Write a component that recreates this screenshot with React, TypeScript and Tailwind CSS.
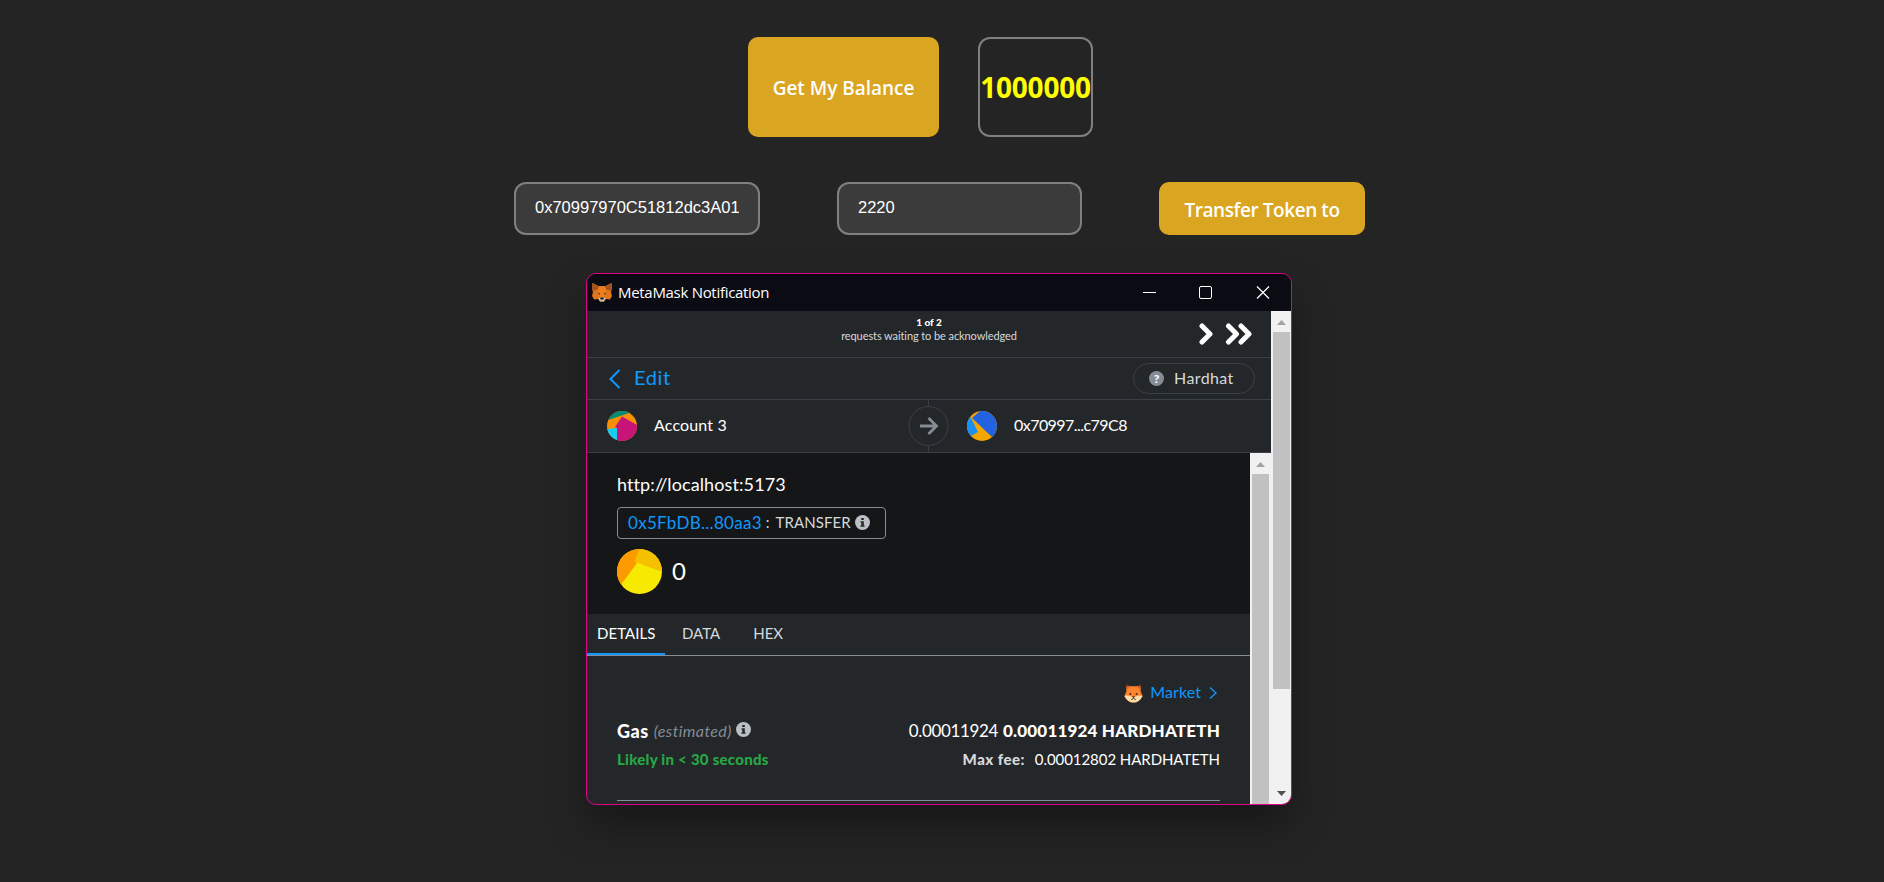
import React from "react";

function FoxLogo() {
  return (
    <svg width="20" height="19" viewBox="0 0 20 19" className="shrink-0">
      <path d="M0.5 0 L7 3.2 H13 L19.5 0 L20 6 L19 9 L20 13 L18 16.5 L14 16 L12 18.5 H8 L6 16 L2 16.5 L0 13 L1 9 L0 6Z" fill="#e2761b" />
      <path d="M0.5 0 L7 3.4 L5.5 6.5 L1 8 L0 6Z M19.5 0 L13 3.4 L14.5 6.5 L19 8 L20 6Z" fill="#a3541f" />
      <path d="M7 3.2 H13 L14 9 L12 14 H8 L6 9Z" fill="#ee7f1c" />
      <path d="M5.5 9.6 L8.2 10.6 L7.3 11.8Z M14.5 9.6 L11.8 10.6 L12.7 11.8Z" fill="#4a2f20" />
      <path d="M6.5 15.5 L8 14.2 H12 L13.5 15.5 L12 18.5 H8Z" fill="#c9bdb4" />
      <path d="M8.2 14.6 H11.8 L11.5 16.6 H8.5Z" fill="#1c1a1a" />
    </svg>
  );
}

function FoxEmoji() {
  return (
    <svg width="19" height="19" viewBox="0 0 20 20" className="shrink-0">
      <path d="M3 0.5 Q5 0.8 6.6 2.4 H13.4 Q15 0.8 17 0.5 Q18 4 17.5 8 L19.6 12.5 Q16 19.5 10 19.5 Q4 19.5 0.4 12.5 L2.5 8 Q2 4 3 0.5Z" fill="#ff822d" />
      <path d="M3 0.5 Q5 0.8 6.6 2.4 L3 2.4Z M17 0.5 Q15 0.8 13.4 2.4 L17 2.4Z" fill="#4d2320" />
      <path d="M3.2 2.6 H6 L3.6 6Z M16.8 2.6 H14 L16.4 6Z" fill="#e8502c" />
      <path d="M0.4 12.5 Q5 11.5 8 13.5 Q10 14.5 12 13.5 Q15 11.5 19.6 12.5 Q16 19.5 10 19.5 Q4 19.5 0.4 12.5Z" fill="#ffdca7" />
      <circle cx="6.7" cy="10.5" r="1.1" fill="#402a32" />
      <circle cx="13.3" cy="10.5" r="1.1" fill="#402a32" />
      <path d="M8.3 13.2 H11.7 L10 15Z" fill="#302024" />
      <path d="M7.6 16.6 L10 15 L12.4 16.6" stroke="#302024" fill="none" />
    </svg>
  );
}

function Info({ className }: { className: string }) {
  return (
    <svg width="15" height="15" viewBox="0 0 15 15" className={className}>
      <circle cx="7.5" cy="7.5" r="7.5" fill="#bbc0c5" />
      <path d="M6.2 3H8.8V5H6.2ZM5.5 6.2H8.8V10.4H9.6V11.8H5.4V10.4H6.3V7.6H5.5Z" fill="#24272a" />
    </svg>
  );
}

function AccountFrom() {
  return (
    <svg width="30" height="30" viewBox="0 0 30 30" className="shrink-0">
      <clipPath id="from"><circle cx="15" cy="15" r="15" /></clipPath>
      <g clipPath="url(#from)">
        <rect width="30" height="30" fill="#fa8e02" />
        <path d="M0 0H30V0L22 2L0 9.5Z" fill="#038c75" />
        <path d="M0 18L10 17V30H0Z" fill="#18cdf2" />
        <path d="M15 5.5L30 14V30H10L10 17L8 16Z" fill="#c81478" />
      </g>
    </svg>
  );
}

function AccountTo() {
  return (
    <svg width="30" height="30" viewBox="0 0 30 30" className="shrink-0">
      <clipPath id="to"><circle cx="15" cy="15" r="15" /></clipPath>
      <g clipPath="url(#to)">
        <rect width="30" height="30" fill="#f3a600" />
        <path d="M13 0H30V30L25 26L5 7Z" fill="#2362e1" />
        <path d="M0 5L4 7L11 21L2 26L0 26Z" fill="#1c8ff2" />
      </g>
    </svg>
  );
}

function TokenIcon() {
  return (
    <svg width="45" height="45" viewBox="0 0 45 45" className="shrink-0">
      <clipPath id="token"><circle cx="22.5" cy="22.5" r="22.5" /></clipPath>
      <g clipPath="url(#token)">
        <rect width="45" height="45" fill="#f5ea00" />
        <path d="M0 0H24L18 12L20 14L0 41Z" fill="#fc9a00" />
        <path d="M22.5 0H45V23L20 13.5L17.5 12.5Z" fill="#f5c000" />
      </g>
    </svg>
  );
}

function TitleBar() {
  return (
    <div className="flex h-[37px] shrink-0 items-center bg-[#0b0b14] pl-[5px] pr-[21px]">
      <FoxLogo />
      <span className="ml-[6px] font-['Open_Sans',sans-serif] text-[15px] tracking-[-0.3px] text-white">MetaMask Notification</span>
      <svg width="127" height="13" viewBox="0 0 127 13" className="ml-auto" fill="none" stroke="#fff">
        <path d="M0 6.5H13" />
        <rect x="56.5" y="0.5" width="12" height="12" rx="1.5" />
        <path d="M114 0.5L126 12.5M126 0.5L114 12.5" strokeWidth="1.2" />
      </svg>
    </div>
  );
}

function Queue() {
  return (
    <div className="flex h-[47px] shrink-0 border-b border-[#3b4046]">
      <div className="w-[177px]" />
      <div className="flex-1 pt-[4px] text-center leading-[14px] text-[#d6d9dc]">
        <div className="text-[10px] font-black text-white"><span>1 of 2</span></div>
        <div className="whitespace-nowrap text-[11px]"><span className="tracking-[-0.09px]">requests waiting to be acknowledged</span></div>
      </div>
      <div className="w-[177px] pl-[105px] pt-[12px]">
        <svg width="54" height="22" viewBox="0 0 54 22" fill="none" stroke="#fff" strokeWidth="5" strokeLinecap="round" strokeLinejoin="round">
          <path d="M3 3L11 11L3 19M29.5 3L37.5 11L29.5 19M42 3L50 11L42 19" />
        </svg>
      </div>
    </div>
  );
}

function EditRow() {
  return (
    <div className="flex h-[42px] shrink-0 items-center border-b border-[#3b4046] pl-[22px] pr-[16px]">
      <svg width="12" height="20" viewBox="0 0 12 20" fill="none" stroke="#1098fc" strokeWidth="2">
        <path d="M10.5 1L1.5 10L10.5 19" />
      </svg>
      <span className="mb-[3px] ml-[13px] text-[20px] tracking-[0.6px] text-[#1098fc]">Edit</span>
      <div className="ml-auto flex h-[31px] w-[122px] items-center rounded-full border border-[#3b4046] pl-[15px]">
        <span className="flex h-[15px] w-[15px] items-center justify-center rounded-full bg-[#848c96] text-[12px] font-black leading-none text-white">?</span>
        <span className="mb-[2px] ml-[10px] text-[16px] tracking-[0.4px] text-[#d6d9dc]">Hardhat</span>
      </div>
    </div>
  );
}

function Accounts() {
  return (
    <div className="flex h-[53px] shrink-0 items-center border-b border-[#3b4046] text-[16px] text-white">
      <div className="flex w-[321px] items-center pl-[20px]">
        <AccountFrom />
        <span className="mb-[2px] ml-[17px] tracking-[0.15px]">Account 3</span>
      </div>
      <svg width="41" height="52" viewBox="0 0 41 52" fill="none" stroke="#3b4046" className="shrink-0">
        <path d="M20.5 0V6M20.5 46V52" />
        <circle cx="20.5" cy="26" r="19.5" />
        <path d="M12 26H28M20.5 18L28.5 26L20.5 34" stroke="#848c96" strokeWidth="2.8" />
      </svg>
      <div className="flex items-center pl-[18px]">
        <AccountTo />
        <span className="mb-[2px] ml-[17px] tracking-[-0.55px]">0x70997...c79C8</span>
      </div>
    </div>
  );
}

function Summary() {
  return (
    <div className="flex h-[161px] shrink-0 flex-col items-start bg-[#141618] pl-[30px] pt-[19px]">
      <div className="text-[18px] leading-[24px] tracking-[0.1px] text-white">http://localhost:5173</div>
      <div className="mt-[11px] flex h-[32px] w-[269px] items-center rounded border border-[#848c96] pl-[10px] text-[15px] text-[#d6d9dc]">
        <span className="text-[17px] tracking-[0.3px] text-[#1098fc]">0x5FbDB...80aa3</span>
        <span className="mb-px ml-[4px]">:</span>
        <span className="mb-px ml-[6px] tracking-[0.08px]">TRANSFER</span>
        <Info className="mb-px ml-[4px]" />
      </div>
      <div className="mt-[10px] flex items-center">
        <TokenIcon />
        <span className="mb-[2px] ml-[10px] text-[24px] text-white">0</span>
      </div>
    </div>
  );
}

function Tabs() {
  return (
    <div className="flex h-[42px] shrink-0 border-b border-[#848c96] text-[15px] leading-[38px] text-[#d6d9dc]">
      <div className="-mb-px h-[41px] w-[78px] border-b-2 border-[#1098fc] pl-[10px] text-white"><span className="tracking-[0.05px]">DETAILS</span></div>
      <div className="pl-[17px]"><span>DATA</span></div>
      <div className="pl-[33px]"><span>HEX</span></div>
    </div>
  );
}

function Fees() {
  return (
    <div className="flex flex-1 flex-col px-[30px]">
      <div className="mt-[25px] flex h-[24px] items-center justify-end text-[16px] text-[#1098fc]">
        <FoxEmoji />
        <span className="mb-[2px] ml-[7px] tracking-[0.1px]">Market</span>
        <svg width="8" height="12" viewBox="0 0 8 12" fill="none" stroke="#1098fc" strokeWidth="1.3" className="mb-px ml-[8px] mr-[3px]">
          <path d="M1 0.5L7 6L1 11.5" />
        </svg>
      </div>
      <div className="mt-[14px] flex h-[24px] items-center text-[17px] text-white">
        <b className="text-[18px] font-black tracking-[0.5px]">Gas</b>
        <i className="ml-[5px] text-[16px] tracking-[0.4px] text-[#848c96]">(estimated)</i>
        <Info className="mb-[3px] ml-[4px]" />
        <span className="ml-auto tracking-[-0.36px]">0.00011924</span>
        <b className="ml-[5px] font-black tracking-[0.18px]">0.00011924 HARDHATETH</b>
      </div>
      <div className="mt-[4px] flex h-[24px] items-center text-[15px]">
        <b className="font-black tracking-[0.26px] text-[#28a745]">Likely in &lt; 30 seconds</b>
        <b className="ml-auto font-black tracking-[0.45px] text-[#d6d9dc]">Max fee:</b>
        <span className="ml-[10px] tracking-[-0.06px] text-white">0.00012802 HARDHATETH</span>
      </div>
      <div className="mt-[29px] h-px shrink-0 bg-[#848c96]" />
    </div>
  );
}

function Notification() {
  return (
    <section className="ml-[586px] mt-[38px] flex h-[532px] w-[706px] flex-col overflow-hidden rounded-[10px] border border-[#e3008c] bg-[#24272a] font-[Lato,sans-serif] shadow-[0_20px_42px_rgba(0,0,0,0.35)]">
      <TitleBar />
      <div className="flex min-h-0 flex-1">
        <div className="flex w-[684px] flex-col">
          <Queue />
          <EditRow />
          <Accounts />
          <div className="flex min-h-0 flex-1">
            <div className="flex w-[663px] flex-col">
              <Summary />
              <Tabs />
              <Fees />
            </div>
            <div className="flex w-[21px] flex-col bg-[#f1f1f1] pl-[2px] pt-[9px]">
              <svg width="17" height="12" viewBox="0 0 17 12" className="shrink-0"><path d="M4 5L8.5 0L13 5Z" fill="#a3a3a3" /></svg>
              <div className="w-[17px] flex-1 bg-[#c1c1c1]" />
            </div>
          </div>
        </div>
        <div className="flex w-[20px] flex-col bg-[#f1f1f1] pl-[2px] pt-[9px]">
          <svg width="17" height="12" viewBox="0 0 17 12" className="shrink-0"><path d="M4 5L8.5 0L13 5Z" fill="#a3a3a3" /></svg>
          <div className="h-[357px] w-[17px] bg-[#c1c1c1]" />
          <svg width="17" height="5" viewBox="0 0 17 5" className="mb-[8px] mt-auto"><path d="M4 0L8.5 5L13 0Z" fill="#505050" /></svg>
        </div>
      </div>
    </section>
  );
}

export default function App() {
  return (
    <main className="h-[882px] overflow-hidden bg-[#242424] pt-[37px] text-white">
      <div className="flex h-[100px] gap-[39px] pl-[748px] font-['Open_Sans',sans-serif]">
        <button className="w-[191px] rounded-[10px] bg-[#daa520] pt-[2px] text-[19px] font-semibold"><span className="tracking-[-0.03px]">Get My Balance</span></button>
        <div className="flex w-[115px] items-center justify-center rounded-[12px] border-2 border-[#808080] text-[28px] font-bold text-[#ffff00]"><span className="tracking-[-0.2px]">1000000</span></div>
      </div>
      <div className="mt-[45px] flex h-[53px] pl-[514px]">
        <input readOnly value="0x70997970C51812dc3A01d7" className="w-[246px] rounded-[12px] border-2 border-[#808080] bg-[#3b3b3b] px-[19px] pb-[3px] font-['Liberation_Sans',Arial,sans-serif] text-[16.5px] text-white outline-none" />
        <input readOnly value="2220" className="ml-[77px] w-[245px] rounded-[12px] border-2 border-[#808080] bg-[#3b3b3b] px-[19px] pb-[3px] font-['Liberation_Sans',Arial,sans-serif] text-[16.5px] text-white outline-none" />
        <button className="ml-[77px] w-[206px] rounded-[10px] bg-[#daa520] pt-[3px] font-['Open_Sans',sans-serif] text-[19px] font-semibold"><span className="tracking-[-0.43px]">Transfer Token to</span></button>
      </div>
      <Notification />
    </main>
  );
}
